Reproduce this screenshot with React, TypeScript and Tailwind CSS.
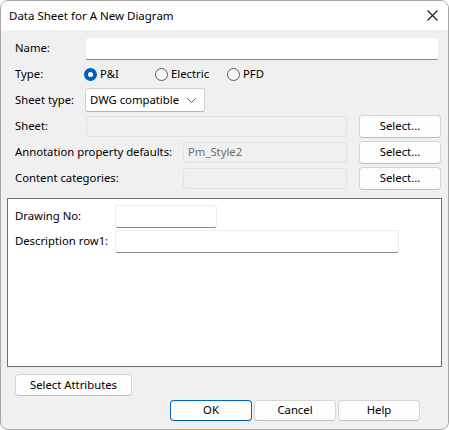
import React from 'react';

const font = { fontFamily: '"Noto Sans", "Open Sans", sans-serif' };

const Btn: React.FC<{ label: string; className?: string; primary?: boolean }> = ({ label, className = '', primary }) => (
  <div
    className={`flex items-center justify-center rounded-[4px] bg-[#fdfdfd] border text-[11.3px] text-black ${
      primary ? 'border-[#0067c0] border-b-[#005a9e]' : 'border-[#d4d4d4] border-b-[#bcbcbc]'
    } ${className}`}
  >
    {label}
  </div>
);

const TextBox: React.FC<{ className?: string }> = ({ className = '' }) => (
  <div className={`bg-white border border-[#ececec] border-b-[#8a8a8a] rounded-[3px] ${className}`} />
);

const Disabled: React.FC<{ className?: string; text?: string }> = ({ className = '', text }) => (
  <div className={`flex items-center bg-[#f0f0f0] border border-[#e2e2e2] rounded-[3px] px-[4px] text-[11.3px] text-[#6d6d6d] ${className}`}>
    {text}
  </div>
);

const Radio: React.FC<{ label: string; checked?: boolean; className?: string }> = ({ label, checked, className = '' }) => (
  <div className={`flex items-center ${className}`}>
    {checked ? (
      <div className="w-[13px] h-[13px] rounded-full bg-[#005fb8] flex items-center justify-center">
        <div className="w-[5px] h-[5px] rounded-full bg-white" />
      </div>
    ) : (
      <div className="w-[13px] h-[13px] rounded-full border border-[#5d5d5d] bg-[#f6f6f6]" />
    )}
    <span className="ml-[3px] text-[11.3px]">{label}</span>
  </div>
);

export default function App() {
  return (
    <div className="w-[449px] h-[430px] bg-white" style={font}>
      <div className="w-[449px] h-[430px] flex flex-col bg-[#f0f0f0] border border-[#a7a7a7] rounded-[8px] overflow-hidden text-black">
        {/* title bar */}
        <div className="h-[29px] bg-white flex items-center justify-between pl-[8px] pr-[10px]">
          <span className="text-[11.5px]">Data Sheet for A New Diagram</span>
          <svg width="11" height="11" viewBox="0 0 11 11">
            <path d="M0.5 0.5 L10.5 10.5 M10.5 0.5 L0.5 10.5" stroke="#1a1a1a" strokeWidth="1.1" />
          </svg>
        </div>

        <div className="flex flex-col px-[6px] pt-[7px] text-[11.3px]">
          <div className="flex items-center h-[23px] pl-[8px]">
            <span className="w-[70px]">Name:</span>
            <TextBox className="w-[354px] h-[23px]" />
          </div>

          <div className="flex items-center h-[22px] mt-[3px] pl-[8px]">
            <span className="w-[69px]">Type:</span>
            <Radio label="P&I" checked className="w-[71px]" />
            <Radio label="Electric" className="w-[72px]" />
            <Radio label="PFD" />
          </div>

          <div className="flex items-center h-[24px] mt-[3px] pl-[8px]">
            <span className="w-[70px]">Sheet type:</span>
            <div className="w-[120px] h-[24px] bg-white border border-[#d0d0d0] border-b-[#b5b5b5] rounded-[3px] flex items-center justify-between pl-[4px] pr-[8px]">
              <span>DWG compatible</span>
              <svg width="9" height="5" viewBox="0 0 9 5">
                <path d="M0.5 0.5 L4.5 4.5 L8.5 0.5" stroke="#5a5a5a" fill="none" strokeWidth="1" />
              </svg>
            </div>
          </div>

          <div className="flex items-center h-[23px] mt-[3px] pl-[8px]">
            <span className="w-[71px]">Sheet:</span>
            <Disabled className="w-[261px] h-[21px]" />
            <Btn label="Select..." className="w-[82px] h-[23px] ml-[12px]" />
          </div>

          <div className="flex items-center h-[23px] mt-[3px] pl-[8px]">
            <span className="w-[168px]">Annotation property defaults:</span>
            <Disabled className="w-[164px] h-[21px]" text="Pm_Style2" />
            <Btn label="Select..." className="w-[82px] h-[23px] ml-[12px]" />
          </div>

          <div className="flex items-center h-[23px] mt-[3px] pl-[8px]">
            <span className="w-[168px]">Content categories:</span>
            <Disabled className="w-[164px] h-[21px]" />
            <Btn label="Select..." className="w-[82px] h-[23px] ml-[12px]" />
          </div>

          <div className="mt-[8px] w-[435px] h-[169px] bg-white border border-[#6e6e6e] flex flex-col pl-[7px] pt-[6px]">
            <div className="flex items-center h-[23px]">
              <span className="w-[100px]">Drawing No:</span>
              <TextBox className="w-[102px] h-[23px]" />
            </div>
            <div className="flex items-center h-[23px] mt-[2px]">
              <span className="w-[100px]">Description row1:</span>
              <TextBox className="w-[284px] h-[23px]" />
            </div>
          </div>

          <div className="flex pl-[8px] mt-[7px]">
            <Btn label="Select Attributes" className="w-[117px] h-[22px]" />
          </div>

          <div className="flex pl-[163px] mt-[4px] gap-[2px]">
            <Btn label="OK" primary className="w-[82px] h-[21px]" />
            <Btn label="Cancel" className="w-[82px] h-[21px]" />
            <Btn label="Help" className="w-[82px] h-[21px]" />
          </div>
        </div>
      </div>
    </div>
  );
}
